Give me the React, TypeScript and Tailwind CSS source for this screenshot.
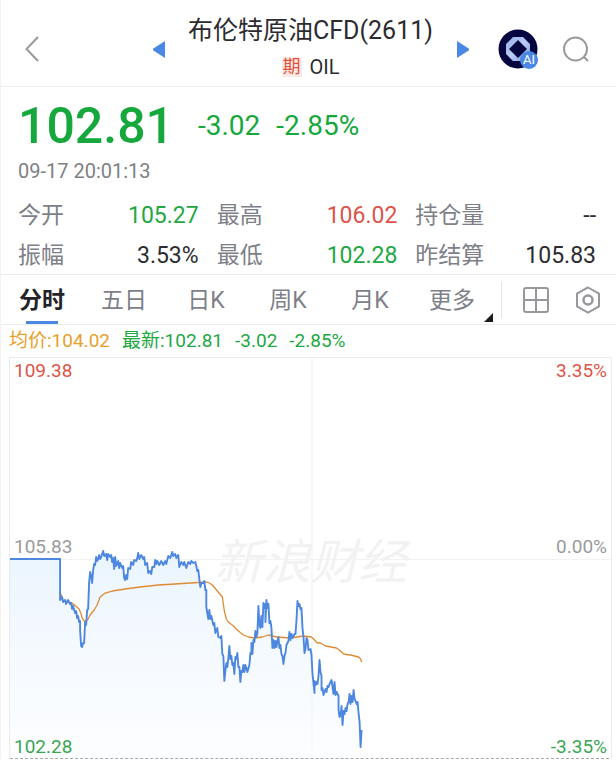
import { useState } from "react";

const tabs = ["分时", "五日", "日K", "周K", "月K", "更多"];

const stats = [
  { label: "今开", value: "105.27", color: "text-[#22a843]" },
  { label: "最高", value: "106.02", color: "text-[#dd5548]" },
  { label: "持仓量", value: "--", color: "text-[#2c2c30]" },
  { label: "振幅", value: "3.53%", color: "text-[#2c2c30]" },
  { label: "最低", value: "102.28", color: "text-[#22a843]" },
  { label: "昨结算", value: "105.83", color: "text-[#2c2c30]" },
];

const pricePoints =
  "10,559 60,559 60,600 62,597 63,602 65,600 66,604 68,600 70,604 71,603 72,609 73,606 75,613 76,611 77,618 78,616 79,622 80,621 80,630 81,646 82,647 83,643 84,643 85,622 86,625 87,610 88,609 89,582 90,572 91,576 92,583 93,570 94,564 95,565 96,557 97,561 98,559 99,555 100,559 101,557 103,551 104,556 106,554 107,560 108,554 110,557 111,555 112,562 113,558 114,569 115,557 116,566 118,561 119,568 120,563 122,568 123,566 124,578 125,580 126,575 127,579 128,568 130,569 131,562 133,565 134,560 136,561 137,558 138,553 139,559 141,555 143,559 144,557 145,565 147,563 148,573 150,571 151,574 152,567 154,567 155,560 156,564 157,561 159,565 161,561 163,565 165,561 166,564 168,556 170,558 172,552 173,556 175,554 176,558 178,555 179,567 181,562 183,565 184,562 186,568 188,562 190,564 191,561 193,563 195,562 196,566 197,571 198,570 199,579 200,587 201,583 203,583 204,581 205,590 206,590 206,607 208,619 209,610 210,619 211,616 213,625 214,623 215,633 217,628 218,637 220,638 221,636 222,654 223,656 224,681 225,671 226,663 227,667 228,658 229,646 230,659 231,656 232,665 233,663 234,674 235,657 236,659 237,653 238,667 239,667 240,682 241,671 242,672 243,665 244,672 245,665 246,668 247,672 249,665 250,653 251,654 251,643 252,654 253,640 254,642 255,631 256,637 257,633 258,606 259,625 260,628 261,616 262,627 263,603 264,608 265,604 265,622 266,600 267,608 268,604 269,623 270,621 271,628 272,648 273,640 274,648 275,641 276,647 277,641 278,637 279,648 280,645 281,654 282,656 283,664 284,656 285,653 286,645 287,643 288,641 289,632 290,640 291,634 292,638 294,634 295,634 296,620 297,601 298,606 299,604 300,609 301,608 302,628 303,637 304,653 305,649 306,638 307,640 308,650 310,649 311,655 312,674 314,693 314,681 315,685 316,682 317,684 318,676 319,660 320,672 321,676 321,690 322,688 323,695 325,689 326,692 327,686 328,687 329,684 331,680 332,687 333,694 334,682 335,695 336,692 338,696 338,710 339,717 340,715 341,706 342,725 343,711 344,714 345,708 346,711 347,704 348,702 349,694 350,704 351,696 352,702 353,690 354,699 355,701 356,704 357,702 358,713 359,722 360,747 361,730";

const averagePoints =
  "61,594 62,600 65,601 72,603 79,609 81,614 82,618 85,622 88,619 90,615 94,610 97,605 100,597 105,593 112,591 125,589 140,587 158,585 175,584 190,583 206,582 209,583 212,585 217,591 222,597 224,611 226,619 228,622 233,626 238,631 243,635 248,637 254,638 262,637 268,635 276,637 290,638 303,636 311,637 314,640 317,643 320,643 325,646 336,648 340,651 343,654 350,655 358,657 360,659 361,662";

const Header = () => (
  <header className="grid h-[87px] grid-cols-[1fr_auto_1fr] items-center border-b border-[#efefef] pl-6 pr-5">
    <button aria-label="返回" className="mt-3 w-4">
      <svg viewBox="0 0 14 26" className="h-[26px] w-[14px]" fill="none" stroke="#9a9a9c" strokeWidth="2">
        <path d="M13 1 1.5 13 13 25" />
      </svg>
    </button>

    <div className="flex w-[316px] items-center justify-between">
      <button aria-label="上一个" className="mt-3">
        <svg viewBox="0 0 12 17" className="h-[17px] w-3" fill="#4a88e6">
          <path d="M12 0v17L0 9.2V7.8z" />
        </svg>
      </button>
      <div className="flex flex-col items-center pt-3">
        <h1 className="text-[25px] leading-8 text-[#2c2c30]">布伦特原油CFD(2611)</h1>
        <p className="mt-1 flex items-center gap-2 text-[20px] leading-8 text-[#2c2c30]">
          <span className="bg-[#fdeae6] px-px text-[18px] leading-5 text-[#e4503c]">期</span>
          OIL
        </p>
      </div>
      <button aria-label="下一个" className="mt-3">
        <svg viewBox="0 0 12 17" className="h-[17px] w-3" fill="#4a88e6">
          <path d="M0 0v17L12 9.2V7.8z" />
        </svg>
      </button>
    </div>

    <div className="mt-3 flex justify-end gap-[18px]">
      <button aria-label="AI" className="relative size-10">
        <svg viewBox="0 0 40 40" className="size-10">
          <defs>
            <linearGradient id="ring" x1="0" y1="0" x2="1" y2="1">
              <stop offset="0" stopColor="#8fadea" />
              <stop offset="0.5" stopColor="#bccdf5" />
              <stop offset="1" stopColor="#6f95e2" />
            </linearGradient>
          </defs>
          <circle cx="20" cy="20" r="19.5" fill="#050540" />
          <path
            fill="url(#ring)"
            fillRule="evenodd"
            d="M15 8h10l7 7v10l-7 7H15l-7-7V15zM20 11 11 20 20 29 29 20z"
          />
        </svg>
        <span className="absolute bottom-0 right-0 size-[18px] rounded-full bg-[#4a88e6] text-[13px] leading-[18px] text-white">
          AI
        </span>
      </button>
      <button aria-label="搜索" className="flex size-10 items-center justify-center">
        <svg viewBox="0 0 26 26" className="size-[26px]" fill="none" stroke="#9a9a9c" strokeWidth="2">
          <circle cx="12.5" cy="13" r="11.5" />
          <path d="m20.5 20.5 4.5 4.5" />
        </svg>
      </button>
    </div>
  </header>
);

const Quote = () => (
  <section className="border-b border-[#ebebeb] pl-[17px] pr-5 pt-3">
    <div className="flex items-center gap-6 text-[#16a83c]">
      <strong className="text-[50px] font-medium leading-[54px]">102.81</strong>
      <span className="flex gap-4 text-[28px] leading-8">
        <span>-3.02</span>
        <span>-2.85%</span>
      </span>
    </div>
    <time className="mt-1 block text-[20px] leading-7 text-[#808084]">09-17 20:01:13</time>
    <dl className="mt-[13px] grid grid-cols-3 gap-x-[18px] gap-y-1">
      {stats.map((s) => (
        <div key={s.label} className="flex justify-between text-[23px] leading-9">
          <dt className="text-[#7e7f88]">{s.label}</dt>
          <dd className={s.color}>{s.value}</dd>
        </div>
      ))}
    </dl>
  </section>
);

const Tabs = () => {
  const [active, setActive] = useState("分时");

  return (
    <nav className="flex h-[50px] items-center border-b border-[#ebebeb]">
      {tabs.map((tab) => (
        <button
          key={tab}
          onClick={() => setActive(tab)}
          className={`relative h-full flex-1 pt-1 text-[23px] ${active === tab ? "font-bold text-[#242428]" : "text-[#7e7f88]"}`}
        >
          {tab}
          {active === tab && <span className="absolute inset-x-0 bottom-0 mx-auto h-[3px] w-8 bg-[#4a88e6]" />}
          {tab === "更多" && (
            <svg viewBox="0 0 9 9" className="absolute bottom-[2px] right-0 size-[9px]" fill="#1c1c1e">
              <path d="M9 0v9H0z" />
            </svg>
          )}
        </button>
      ))}
      <div className="ml-2 flex h-9 items-center gap-6 border-l border-[#e4e4e4] pl-5 pr-[14px]">
        <button aria-label="多图">
          <svg viewBox="0 0 28 28" className="size-7" fill="none" stroke="#98989c" strokeWidth="2">
            <rect x="2" y="2" width="24" height="24" rx="2" />
            <path d="M14 2v24M2 14h24" />
          </svg>
        </button>
        <button aria-label="设置">
          <svg viewBox="0 0 28 28" className="size-7" fill="none" stroke="#98989c" strokeWidth="2">
            <path d="m14 1.5 11 6.2v12.6l-11 6.2-11-6.2V7.7z" />
            <circle cx="14" cy="14" r="4.5" strokeWidth="2.5" />
          </svg>
        </button>
      </div>
    </nav>
  );
};

const Chart = () => (
  <figure className="relative ml-2 mr-1 aspect-[3/2] border border-b-0 border-[#e9ebee] text-[19px] leading-6">
    <span className="absolute inset-x-0 top-[45%] text-center text-[48px] italic leading-[50px] text-[#f2f2f3]">
      新浪财经
    </span>
    <svg viewBox="10 358 600 401" preserveAspectRatio="none" className="absolute inset-0 size-full" fill="none">
      <defs>
        <linearGradient id="area" x1="0" y1="552" x2="0" y2="759" gradientUnits="userSpaceOnUse">
          <stop offset="0" stopColor="#ddeefd" stopOpacity="0.6" />
          <stop offset="1" stopColor="#f8fbff" stopOpacity="0.4" />
        </linearGradient>
      </defs>
      <path d="M10 559.5H610M311.5 358V759" stroke="#f1f2f4" />
      <polygon points={`${pricePoints} 361,759 10,759`} fill="url(#area)" />
      <polyline points={averagePoints} stroke="#e08a35" strokeWidth="1.3" strokeLinejoin="round" />
      <polyline points={pricePoints} stroke="#4d87e0" strokeWidth="1.9" strokeLinejoin="round" />
      <path d="M10 758.5H610" stroke="#a8a8a8" strokeDasharray="3 2" />
    </svg>
    <span className="absolute left-1 top-px text-[#dd5548]">109.38</span>
    <span className="absolute right-1 top-px text-[#dd5548]">3.35%</span>
    <span className="absolute bottom-1/2 left-1 text-[#9a9a9c]">105.83</span>
    <span className="absolute bottom-1/2 right-1 text-[#9a9a9c]">0.00%</span>
    <span className="absolute bottom-0 left-1 text-[#3aa555]">102.28</span>
    <span className="absolute bottom-0 right-1 text-[#3aa555]">-3.35%</span>
  </figure>
);

export default function App() {
  return (
    <main className="border-l border-[#f2f2f2] bg-white font-['Roboto','Noto_Sans_CJK_SC',sans-serif]">
      <Header />
      <Quote />
      <Tabs />
      <p className="flex gap-3 pl-2 text-[19px] leading-8 text-[#22a843]">
        <span className="text-[#e8a02c]">均价:104.02</span>
        <span>最新:102.81</span>
        <span>-3.02</span>
        <span>-2.85%</span>
      </p>
      <Chart />
    </main>
  );
}
